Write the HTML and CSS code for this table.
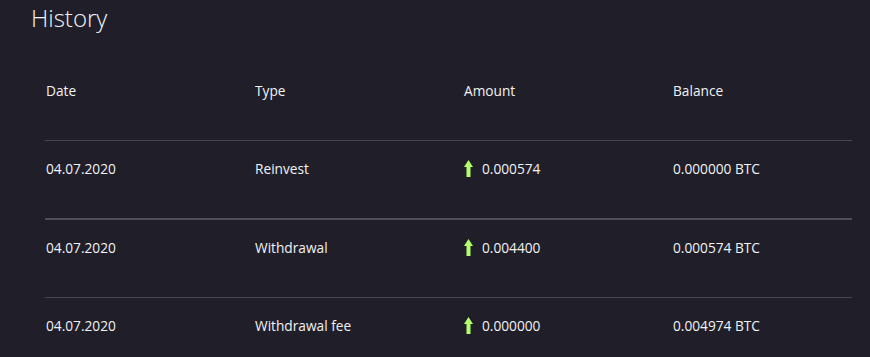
FILE: index.html
```html
<!DOCTYPE html>
<html>
<head>
<meta charset="utf-8">
<link rel="stylesheet" href="styles.css">
</head>
<body>
<h1 class="title">History</h1>
<div class="table">
  <div class="row head">
    <div class="cell">Date</div>
    <div class="cell">Type</div>
    <div class="cell">Amount</div>
    <div class="cell">Balance</div>
  </div>
  <div class="row">
    <div class="cell">04.07.2020</div>
    <div class="cell">Reinvest</div>
    <div class="cell amount"><svg class="arrow" width="9" height="17" viewBox="0 0 9 17"><path d="M4.5 0 L9 7 L6.5 7 L6.5 17 L2.5 17 L2.5 7 L0 7 Z" fill="#b3ff6b"/></svg>0.000574</div>
    <div class="cell">0.000000 BTC</div>
  </div>
  <div class="row thick">
    <div class="cell">04.07.2020</div>
    <div class="cell">Withdrawal</div>
    <div class="cell amount"><svg class="arrow" width="9" height="17" viewBox="0 0 9 17"><path d="M4.5 0 L9 7 L6.5 7 L6.5 17 L2.5 17 L2.5 7 L0 7 Z" fill="#b3ff6b"/></svg>0.004400</div>
    <div class="cell">0.000574 BTC</div>
  </div>
  <div class="row">
    <div class="cell">04.07.2020</div>
    <div class="cell">Withdrawal fee</div>
    <div class="cell amount"><svg class="arrow" width="9" height="17" viewBox="0 0 9 17"><path d="M4.5 0 L9 7 L6.5 7 L6.5 17 L2.5 17 L2.5 7 L0 7 Z" fill="#b3ff6b"/></svg>0.000000</div>
    <div class="cell">0.004974 BTC</div>
  </div>
</div>
</body>
</html>
```
FILE: styles.css
```css
html, body {
  margin: 0;
  padding: 0;
  background: #201f29;
  font-family: "Open Sans", "Noto Sans", sans-serif;
  color: #f2f2f4;
  height: 357px;
  overflow: hidden;
}
.title {
  margin: 0;
  padding: 1px 0 0 31px;
  font-size: 24px;
  font-weight: 300;
  line-height: 34px;
  height: 35px;
}
.table {
  margin-left: 45px;
  width: 807px;
  padding-top: 27px;
}
.row {
  display: grid;
  grid-template-columns: 209px 209px 209px 1fr;
  font-size: 13.7px;
  line-height: 19px;
  padding: 18px 0 40px 0;
  border-top: 1px solid #47464f;
}
.row.head {
  border-top: none;
}
.row.thick {
  border-top: 2px solid #4f4e57;
}
.cell {
  padding-left: 1px;
  white-space: nowrap;
}
.amount {
  display: flex;
  align-items: center;
}
.arrow {
  margin-right: 9px;
  flex: none;
}
```
